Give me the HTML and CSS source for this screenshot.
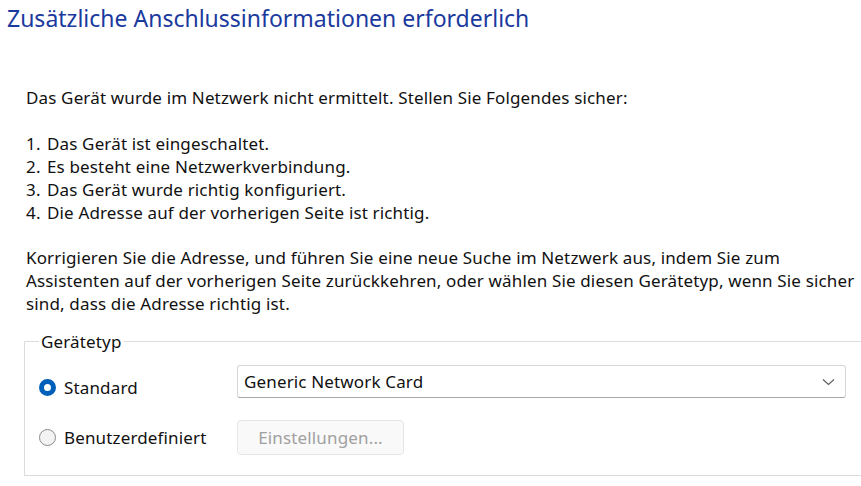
FILE: index.html
```html
<!DOCTYPE html>
<html lang="de">
<head>
  <meta charset="UTF-8" />
  <meta name="viewport" content="width=device-width, initial-scale=1.0" />
  <title>Zusätzliche Anschlussinformationen erforderlich</title>
  <link rel="stylesheet" href="styles.css">
</head>
<body>
  <h1 class="title">Zusätzliche Anschlussinformationen erforderlich</h1>

  <div class="content">
    <p>Das Gerät wurde im Netzwerk nicht ermittelt. Stellen Sie Folgendes sicher:</p>

    <ol class="checks">
      <li>Das Gerät ist eingeschaltet.</li>
      <li>Es besteht eine Netzwerkverbindung.</li>
      <li>Das Gerät wurde richtig konfiguriert.</li>
      <li>Die Adresse auf der vorherigen Seite ist richtig.</li>
    </ol>

    <p class="hint">Korrigieren Sie die Adresse, und führen Sie eine neue Suche im Netzwerk aus, indem Sie zum Assistenten auf der vorherigen Seite zurückkehren, oder wählen Sie diesen Gerätetyp, wenn Sie sicher sind, dass die Adresse richtig ist.</p>

    <fieldset class="device-type">
      <legend>Gerätetyp</legend>

      <div class="option-row first">
        <label class="option">
          <input type="radio" name="type" value="standard" checked>
          <span>Standard</span>
        </label>
        <div class="select">
          <span>Generic Network Card</span>
          <svg class="chevron" width="13" height="8" viewBox="0 0 13 8">
            <path d="M1 1.5 L6.5 6.5 L12 1.5" fill="none" stroke="#5f5f5f" stroke-width="1.2"/>
          </svg>
        </div>
      </div>

      <div class="option-row">
        <label class="option">
          <input type="radio" name="type" value="custom">
          <span>Benutzerdefiniert</span>
        </label>
        <button type="button" class="settings" disabled>Einstellungen...</button>
      </div>
    </fieldset>
  </div>
</body>
</html>
```

FILE: styles.css
```css
body {
  font-family: "Noto Sans", "Open Sans", sans-serif;
  font-size: 17px;
  line-height: 23px;
  letter-spacing: 0.15px;
  color: #111;
  background-color: #fff;
  margin: 0;
  padding: 0;
  overflow: hidden;
}
.title {
  margin: 0;
  padding: 3px 0 0 7px;
  font-size: 23px;
  line-height: 30px;
  font-weight: normal;
  letter-spacing: 0;
  color: #1a3a9e;
}
.content {
  padding-left: 26px;
}
.content p {
  margin: 53px 0 0 0;
}
.checks {
  list-style: none;
  counter-reset: step;
  margin: 23px 0 0 0;
  padding: 0;
}
.checks li {
  counter-increment: step;
}
.checks li::before {
  content: counter(step) ".";
  display: inline-block;
  width: 21px;
}
.content p.hint {
  margin-top: 22px;
  width: 832px;
}
.device-type {
  margin: 15px 0 0 -2px;
  padding: 12px 0 20px 14px;
  width: 860px;
  border: 1px solid #dcdcdc;
}
.device-type legend {
  padding: 0 2px;
}
.option-row {
  display: flex;
  align-items: center;
}
.option-row.first {
  align-items: flex-start;
  margin-bottom: 21px;
}
.option-row.first .option {
  margin-top: 11px;
}
.option {
  display: flex;
  align-items: center;
  width: 198px;
}
.option input {
  appearance: none;
  margin: 0 8px 0 0;
  width: 17px;
  height: 17px;
  border: 1px solid #8a8a8a;
  border-radius: 50%;
  background-color: #f3f3f3;
  box-sizing: border-box;
}
.option input:checked {
  border: 5.5px solid #005fb8;
  background-color: #fff;
}
.select {
  display: flex;
  align-items: center;
  justify-content: space-between;
  box-sizing: border-box;
  width: 609px;
  height: 33px;
  padding: 0 10px 0 6px;
  background-color: #fff;
  border: 1px solid #d6d6d6;
  border-bottom-color: #a8a8a8;
  border-radius: 3px;
}
.settings {
  width: 167px;
  height: 35px;
  font-family: inherit;
  font-size: 17px;
  letter-spacing: 0.15px;
  color: #a0a0a0;
  background-color: #f9f9f9;
  border: 1px solid #e5e5e5;
  border-radius: 4px;
}
```
